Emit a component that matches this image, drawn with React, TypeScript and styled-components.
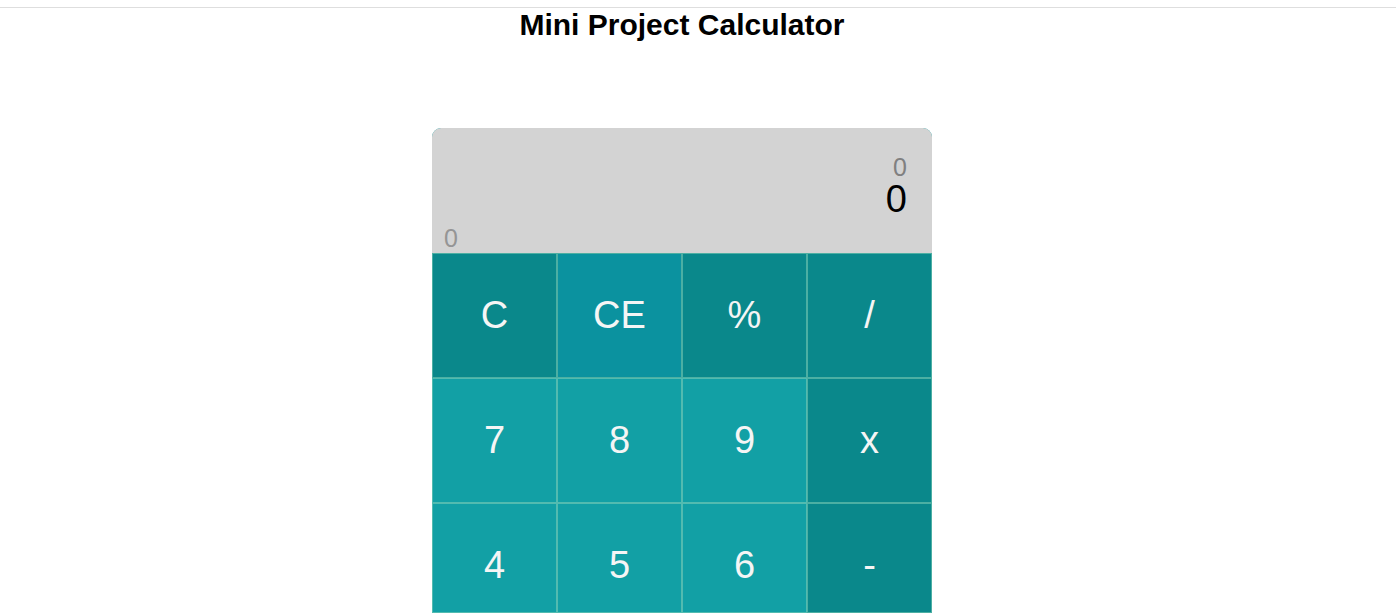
import React, { useState } from "react";
import styled, { createGlobalStyle } from "styled-components";

const GlobalStyle = createGlobalStyle`
  *, *::before, *::after { box-sizing: border-box; }
  body {
    margin: 0;
    background: #fff;
    color: #000;
    font-family: "Liberation Sans", Arial, Helvetica, sans-serif;
  }
`;

const Page = styled.div`
  padding-top: 7px;
`;

const Content = styled.main`
  display: flex;
  flex-direction: column;
  align-items: center;
  padding-right: 32px;
  border-top: 1px solid #dedede;
`;

const Title = styled.h1`
  margin: 0 0 86px;
  font-size: 30px;
  line-height: 34px;
`;

const Calculator = styled.section`
  width: 100%;
  max-width: 500px;
  border-radius: 9px 9px 0 0;
  overflow: hidden;
  background: #12a0a5;
`;

const Display = styled.div`
  display: flex;
  flex-direction: column;
  height: 125px;
  padding: 25px 25px 0 12px;
  background: #d3d3d3;
`;

const Readout = styled.output<{ $main?: boolean }>`
  text-align: right;
  font-size: ${(p) => (p.$main ? "38px" : "25px")};
  line-height: ${(p) => (p.$main ? "36px" : "28px")};
  color: ${(p) => (p.$main ? "#000" : "#808080")};
`;

const Memory = styled.output`
  margin-top: auto;
  font-size: 25px;
  line-height: 30px;
  color: #959595;
`;

const Keypad = styled.div`
  display: grid;
  grid-template-columns: repeat(4, 1fr);
  grid-template-rows: 125px 125px 110px;
`;

type Tone = "digit" | "operator" | "clear";

const fills: Record<Tone, string> = {
  digit: "#12a0a5",
  operator: "#0a888b",
  clear: "#0b929f",
};

const Key = styled.button<{ $tone: Tone }>`
  display: flex;
  align-items: flex-start;
  justify-content: center;
  min-width: 0;
  margin: 0;
  padding: 0;
  border: 1px solid ${(p) => (p.$tone === "digit" ? "#52bbb0" : "#4cafa3")};
  background: ${(p) => fills[p.$tone]};
  color: #f5f5f5;
  font: inherit;
  font-size: 38px;
  line-height: 123px;
  cursor: pointer;
`;

const keys: { label: string; tone: Tone }[] = [
  { label: "C", tone: "operator" },
  { label: "CE", tone: "clear" },
  { label: "%", tone: "operator" },
  { label: "/", tone: "operator" },
  { label: "7", tone: "digit" },
  { label: "8", tone: "digit" },
  { label: "9", tone: "digit" },
  { label: "x", tone: "operator" },
  { label: "4", tone: "digit" },
  { label: "5", tone: "digit" },
  { label: "6", tone: "digit" },
  { label: "-", tone: "operator" },
];

export default function App() {
  const [value, setValue] = useState("0");

  const press = (label: string, tone: Tone) => {
    if (tone === "digit") setValue((v) => (v === "0" ? label : v + label));
    else if (label === "C" || label === "CE") setValue("0");
  };

  return (
    <>
      <GlobalStyle />
      <Page>
        <Content>
          <Title>Mini Project Calculator</Title>
          <Calculator aria-label="Calculator">
            <Display>
              <Readout>0</Readout>
              <Readout $main>{value}</Readout>
              <Memory>0</Memory>
            </Display>
            <Keypad>
              {keys.map(({ label, tone }) => (
                <Key key={label} type="button" $tone={tone} onClick={() => press(label, tone)}>
                  {label}
                </Key>
              ))}
            </Keypad>
          </Calculator>
        </Content>
      </Page>
    </>
  );
}
